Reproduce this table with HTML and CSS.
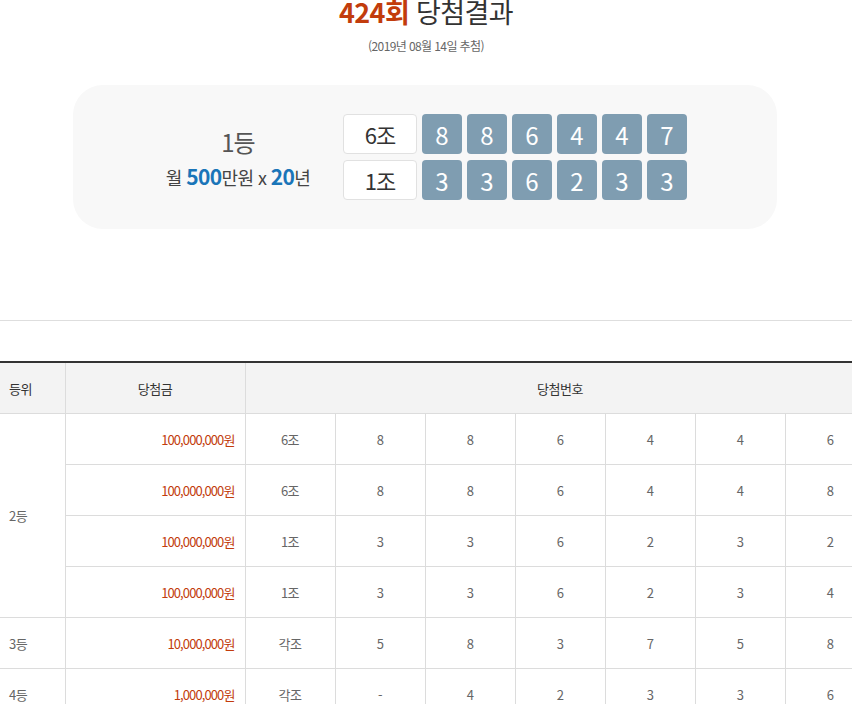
FILE: index.html
```html
<!DOCTYPE html>
<html lang="ko">
<head>
<meta charset="utf-8">
<link rel="stylesheet" href="styles.css">
</head>
<body>
<div class="page">
  <h2 class="title"><strong>424회</strong> 당첨결과</h2>
  <p class="date">(2019년 08월 14일 추첨)</p>

  <div class="win-box">
    <div class="win-info">
      <div class="rank">1등</div>
      <div class="prize">월 <b>500</b>만원 x <b>20</b>년</div>
    </div>
    <div class="win-nums">
      <div class="num-row">
        <span class="grp">6조</span>
        <span class="ball">8</span><span class="ball">8</span><span class="ball">6</span><span class="ball">4</span><span class="ball">4</span><span class="ball">7</span>
      </div>
      <div class="num-row">
        <span class="grp">1조</span>
        <span class="ball">3</span><span class="ball">3</span><span class="ball">6</span><span class="ball">2</span><span class="ball">3</span><span class="ball">3</span>
      </div>
    </div>
  </div>

  <hr class="divider">

  <div class="tbl-wrap">
    <table class="result">
      <colgroup>
        <col class="c-rank"><col class="c-prize">
        <col class="c-num"><col class="c-num"><col class="c-num"><col class="c-num"><col class="c-num"><col class="c-num"><col class="c-num">
      </colgroup>
      <thead>
        <tr><th class="left">등위</th><th>당첨금</th><th colspan="7">당첨번호</th></tr>
      </thead>
      <tbody>
        <tr><td class="left" rowspan="4">2등</td><td class="money">100,000,000원</td><td>6조</td><td>8</td><td>8</td><td>6</td><td>4</td><td>4</td><td>6</td></tr>
        <tr><td class="money">100,000,000원</td><td>6조</td><td>8</td><td>8</td><td>6</td><td>4</td><td>4</td><td>8</td></tr>
        <tr><td class="money">100,000,000원</td><td>1조</td><td>3</td><td>3</td><td>6</td><td>2</td><td>3</td><td>2</td></tr>
        <tr><td class="money">100,000,000원</td><td>1조</td><td>3</td><td>3</td><td>6</td><td>2</td><td>3</td><td>4</td></tr>
        <tr><td class="left">3등</td><td class="money">10,000,000원</td><td>각조</td><td>5</td><td>8</td><td>3</td><td>7</td><td>5</td><td>8</td></tr>
        <tr><td class="left">4등</td><td class="money">1,000,000원</td><td>각조</td><td>-</td><td>4</td><td>2</td><td>3</td><td>3</td><td>6</td></tr>
      </tbody>
    </table>
  </div>
</div>
</body>
</html>
```
FILE: styles.css
```css
html, body {
  margin: 0;
  padding: 0;
  background: #fff;
  overflow: hidden;
}
body {
  font-family: "Noto Sans CJK KR", "Noto Sans", sans-serif;
  color: #666;
  width: 852px;
  height: 704px;
}
.page {
  width: 852px;
}
.title {
  margin: -3px 0 0;
  text-align: center;
  font-size: 27px;
  line-height: 30px;
  font-weight: 400;
  color: #333;
  letter-spacing: -0.6px;
}
.title strong {
  color: #c23c0c;
  font-weight: 700;
}
.date {
  margin: 11px 0 0;
  text-align: center;
  font-size: 12px;
  line-height: 16px;
  color: #666;
  letter-spacing: -0.6px;
}
.win-box {
  margin: 31px 0 0 73px;
  width: 704px;
  height: 144px;
  box-sizing: border-box;
  background: #f8f8f8;
  border-radius: 30px;
  display: flex;
  align-items: center;
  padding-left: 80px;
}
.win-info {
  width: 170px;
  text-align: center;
}
.rank {
  font-size: 24px;
  line-height: 30px;
  color: #555;
  letter-spacing: -1px;
}
.prize {
  margin-top: 8px;
  font-size: 18px;
  line-height: 22px;
  color: #444;
  letter-spacing: -0.6px;
  white-space: nowrap;
}
.prize b {
  color: #1a75b8;
  font-weight: 700;
  font-size: 21px;
}
.win-nums {
  margin-left: 20px;
  display: flex;
  flex-direction: column;
  gap: 6px;
}
.num-row {
  display: flex;
  gap: 5px;
}
.grp {
  width: 74px;
  height: 40px;
  box-sizing: border-box;
  background: #fff;
  border: 1px solid #e1e1e1;
  border-radius: 4px;
  display: flex;
  align-items: center;
  justify-content: center;
  font-size: 22px;
  color: #333;
  letter-spacing: -1px;
}
.ball {
  width: 40px;
  height: 40px;
  border-radius: 4px;
  background: #7f9db1;
  color: #fff;
  display: flex;
  align-items: center;
  justify-content: center;
  font-size: 24px;
}
.divider {
  margin: 91px 0 0;
  border: 0;
  border-top: 1px solid #dedede;
  height: 0;
}
.tbl-wrap {
  margin-top: 40px;
  width: 852px;
  overflow: hidden;
}
.result {
  width: 875px;
  border-collapse: collapse;
  table-layout: fixed;
  border-top: 2px solid #333;
  font-size: 13px;
  letter-spacing: -0.5px;
}
.c-rank { width: 65px; }
.c-prize { width: 180px; }
.c-num { width: 90px; }
.result th {
  height: 50px;
  background: #f3f3f3;
  font-weight: 400;
  color: #333;
  border: 1px solid #dcdcdc;
  border-top: 0;
  padding: 0;
}
.result td {
  height: 50px;
  text-align: center;
  color: #666;
  border: 1px solid #dcdcdc;
  padding: 0;
}
.result th:first-child,
.result td.left {
  border-left: 0;
}
.result .left {
  text-align: left;
  padding-left: 9px;
}
.result td.money {
  text-align: right;
  padding-right: 10px;
  color: #c23c0c;
  letter-spacing: -0.9px;
}
```
